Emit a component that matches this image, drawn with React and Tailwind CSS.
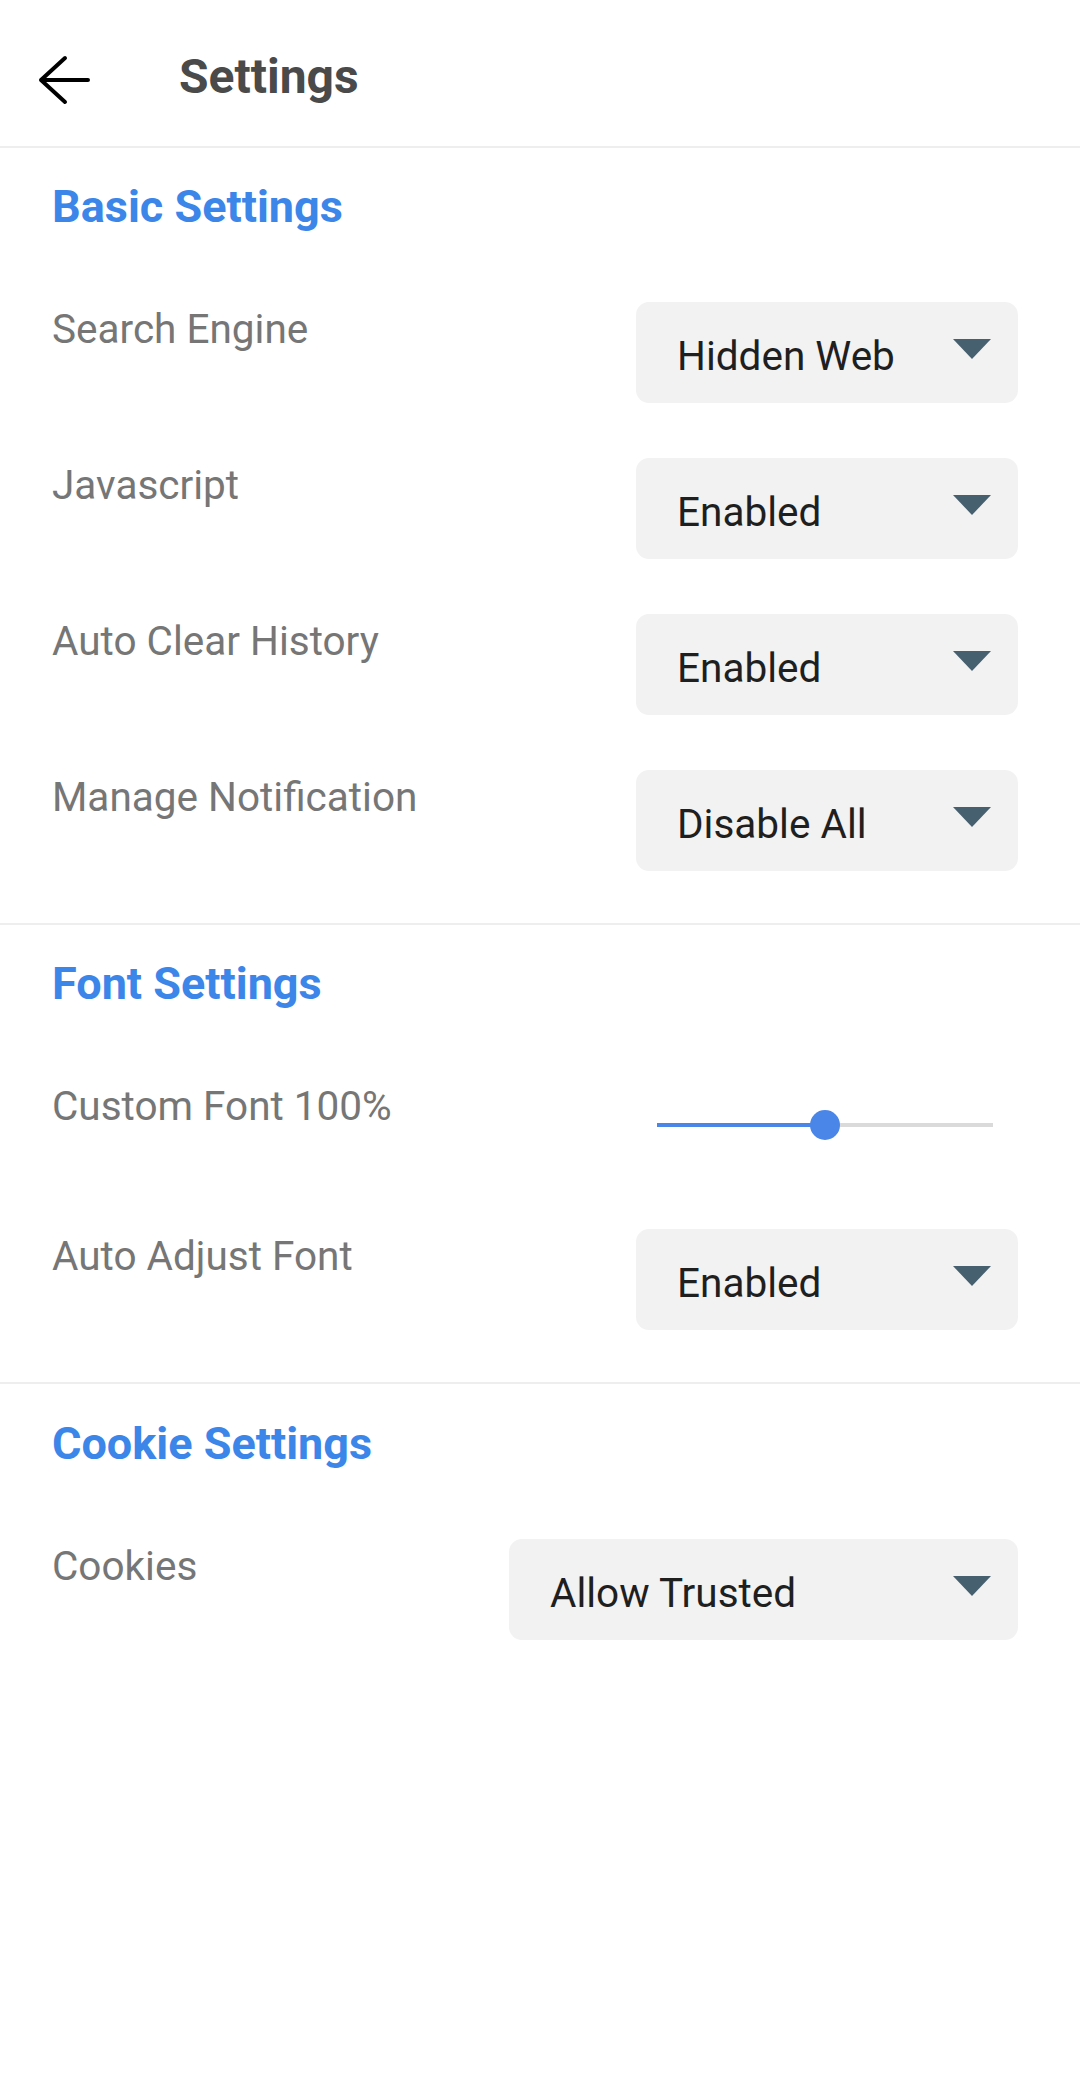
import React from "react";

function Caret() {
  return (
    <svg width="38" height="20" viewBox="0 0 38 20" className="shrink-0 mt-[37px]">
      <polygon points="0,0 38,0 19,20" fill="#46606f" />
    </svg>
  );
}

function Dropdown({ value, wide }) {
  return (
    <div
      className={
        (wide ? "w-[509px]" : "w-[382px]") +
        " h-[101px] shrink-0 rounded-[13px] bg-[#f2f2f2] flex items-start justify-between pl-[41px] pr-[27px]"
      }
    >
      <span className="mt-[30px] text-[40.5px] leading-[48px] text-[#1f1f1f]">{value}</span>
      <Caret />
    </div>
  );
}

function Row({ label, children }) {
  return (
    <div className="flex items-start justify-between">
      <span className="text-[40.5px] leading-[54px] text-[#767676]">{label}</span>
      {children}
    </div>
  );
}

function Heading({ children }) {
  return (
    <h2 className="text-[45px] leading-[54px] font-bold text-[#3b86e8]">{children}</h2>
  );
}

function Slider() {
  return (
    <div className="w-[382px] h-[95px] shrink-0 flex items-start pl-[21px] pr-[25px]">
      <div className="relative w-full h-[4px] mt-[44px] bg-[#dadada]">
        <div className="absolute left-0 top-0 h-[4px] w-[168px] bg-[#4a86e8]" />
        <div className="absolute left-[153px] top-[-13px] w-[30px] h-[30px] rounded-full bg-[#4a86e8]" />
      </div>
    </div>
  );
}

export default function App() {
  return (
    <div
      className="w-[1080px] min-h-[2077px] bg-white"
      style={{ fontFamily: "Roboto, 'Noto Sans', sans-serif" }}
    >
      <header className="h-[148px] border-b-2 border-[#eeeeee] pt-[50px]">
        <div className="flex items-center h-[54px]">
          <svg width="56" height="50" viewBox="0 0 56 50" className="ml-[36px] mt-[6px]">
            <path
              d="M5 25 H52 M29 3 L5 25 L29 47"
              fill="none"
              stroke="#000"
              strokeWidth="4"
              strokeLinecap="round"
              strokeLinejoin="round"
            />
          </svg>
          <h1 className="ml-[87px] text-[48px] leading-[54px] font-bold text-[#4a4a4a]">Settings</h1>
        </div>
      </header>

      <section className="pl-[52px] pr-[62px] pt-[32px] pb-[52px] border-b-2 border-[#eeeeee]">
        <Heading>Basic Settings</Heading>
        <div className="mt-[68px] flex flex-col gap-[55px]">
          <Row label="Search Engine">
            <Dropdown value="Hidden Web" />
          </Row>
          <Row label="Javascript">
            <Dropdown value="Enabled" />
          </Row>
          <Row label="Auto Clear History">
            <Dropdown value="Enabled" />
          </Row>
          <Row label="Manage Notification">
            <Dropdown value="Disable All" />
          </Row>
        </div>
      </section>

      <section className="pl-[52px] pr-[62px] pt-[32px] pb-[52px] border-b-2 border-[#eeeeee]">
        <Heading>Font Settings</Heading>
        <div className="mt-[68px] flex flex-col gap-[55px]">
          <Row label="Custom Font 100%">
            <Slider />
          </Row>
          <Row label="Auto Adjust Font">
            <Dropdown value="Enabled" />
          </Row>
        </div>
      </section>

      <section className="pl-[52px] pr-[62px] pt-[33px] pb-[52px]">
        <Heading>Cookie Settings</Heading>
        <div className="mt-[68px] flex flex-col gap-[55px]">
          <Row label="Cookies">
            <Dropdown value="Allow Trusted" wide />
          </Row>
        </div>
      </section>
    </div>
  );
}
